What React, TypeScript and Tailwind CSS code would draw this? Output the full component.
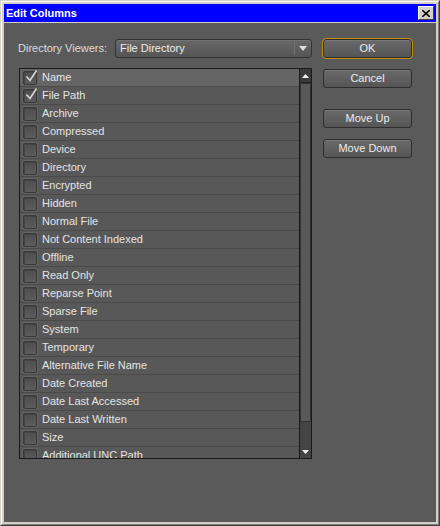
import React from "react";

const columns: { label: string; checked: boolean }[] = [
  { label: "Name", checked: true },
  { label: "File Path", checked: true },
  { label: "Archive", checked: false },
  { label: "Compressed", checked: false },
  { label: "Device", checked: false },
  { label: "Directory", checked: false },
  { label: "Encrypted", checked: false },
  { label: "Hidden", checked: false },
  { label: "Normal File", checked: false },
  { label: "Not Content Indexed", checked: false },
  { label: "Offline", checked: false },
  { label: "Read Only", checked: false },
  { label: "Reparse Point", checked: false },
  { label: "Sparse File", checked: false },
  { label: "System", checked: false },
  { label: "Temporary", checked: false },
  { label: "Alternative File Name", checked: false },
  { label: "Date Created", checked: false },
  { label: "Date Last Accessed", checked: false },
  { label: "Date Last Written", checked: false },
  { label: "Size", checked: false },
  { label: "Additional UNC Path", checked: false },
];

function CheckBox({ checked }: { checked: boolean }) {
  return (
    <div className="relative w-[14px] h-[14px] shrink-0 rounded-[2px] border border-[#383838] bg-gradient-to-b from-[#4e4e4e] to-[#5c5c5c] shadow-[inset_1px_1px_0_#444,0_0_0_1px_#636363]">
      {checked && (
        <svg
          className="absolute left-[1px] top-[-3px]"
          width="13"
          height="14"
          viewBox="0 0 13 14"
        >
          <path
            d="M1.5 7.5 L5 11.5 L11.5 1.5"
            fill="none"
            stroke="#d8d8d8"
            strokeWidth="1.6"
          />
        </svg>
      )}
    </div>
  );
}

function DarkButton({
  label,
  focused,
  className,
}: {
  label: string;
  focused?: boolean;
  className?: string;
}) {
  return (
    <div
      className={
        "w-[89px] h-[19px] flex items-center justify-center rounded-[3px] border bg-gradient-to-b from-[#6a6a6a] to-[#555555] text-[11px] text-[#ececec] shadow-[inset_0_1px_0_#777] " +
        (focused
          ? "border-[#2e2e2e] outline outline-1 outline-[#c08f00] "
          : "border-[#2e2e2e] ") +
        (className ?? "")
      }
    >
      {label}
    </div>
  );
}

export default function App() {
  return (
    <div
      className="w-[440px] h-[526px] bg-[#d4d0c8] border-t border-l border-r border-b border-t-[#d4d0c8] border-l-[#d4d0c8] border-r-[#404040] border-b-[#404040]"
      style={{ fontFamily: '"Liberation Sans", Arial, sans-serif' }}
    >
      <div className="w-full h-full border border-t-white border-l-white border-r-[#808080] border-b-[#808080] p-[2px] flex flex-col">
        {/* title bar */}
        <div className="h-[18px] bg-[#0000ff] flex items-center justify-between pl-[2px] pr-[2px]">
          <span className="text-white font-bold text-[11px] leading-none">Edit Columns</span>
          <div className="w-[16px] h-[14px] bg-[#d4d0c8] border border-t-white border-l-white border-r-[#404040] border-b-[#404040] flex items-center justify-center">
            <svg width="8" height="7" viewBox="0 0 8 7">
              <path d="M0 0 L8 7 M8 0 L0 7" stroke="#000" strokeWidth="1.6" />
            </svg>
          </div>
        </div>
        <div className="h-[1px] bg-[#d4d0c8]" />
        {/* client area */}
        <div className="flex-1 bg-[#5a5a5a] flex pt-[16px] pl-[14px]">
          <div className="flex flex-col w-[294px]">
            <div className="flex items-center h-[19px]">
              <span className="text-[11px] text-[#dcdcdc] w-[97px] pl-0">Directory Viewers:</span>
              <div className="w-[197px] h-[19px] rounded-[3px] border border-[#333] bg-gradient-to-b from-[#686868] to-[#555555] shadow-[inset_0_1px_0_#747474] flex items-center">
                <span className="flex-1 pl-[4px] text-[11px] text-[#ececec]">File Directory</span>
                <div className="w-[1px] h-[13px] bg-[#3c3c3c] border-r border-[#707070]" />
                <div className="w-[16px] flex items-center justify-center">
                  <svg width="8" height="5" viewBox="0 0 8 5">
                    <path d="M0 0 H8 L4 5 Z" fill="#e0e0e0" />
                  </svg>
                </div>
              </div>
            </div>
            {/* column list */}
            <div className="mt-[10px] ml-[1px] h-[391px] border border-[#1a1a1a] flex overflow-hidden">
              <div className="flex-1 flex flex-col overflow-hidden bg-[#585858]">
                {columns.map((c, i) => (
                  <div
                    key={c.label}
                    className={
                      "h-[18px] shrink-0 flex items-center pl-[3px] gap-[5px] border-b border-[#4a4a4a] " +
                      (i === 0 ? "bg-[#656565]" : "bg-[#585858]")
                    }
                  >
                    <CheckBox checked={c.checked} />
                    <span className="text-[11px] text-[#e4e4e4] leading-none">{c.label}</span>
                  </div>
                ))}
              </div>
              {/* scrollbar */}
              <div className="w-[12px] border-l border-[#1a1a1a] bg-[#444444] flex flex-col">
                <div className="h-[14px] bg-[#3a3a3a] flex items-center justify-center border-b border-[#222]">
                  <svg width="7" height="4" viewBox="0 0 7 4">
                    <path d="M0 4 H7 L3.5 0 Z" fill="#f0f0f0" />
                  </svg>
                </div>
                <div className="h-[339px] mx-0 bg-[#595959] border border-[#333] rounded-[1px]" />
                <div className="flex-1 flex items-end justify-center pb-[4px]">
                  <svg width="7" height="4" viewBox="0 0 7 4">
                    <path d="M0 0 H7 L3.5 4 Z" fill="#f0f0f0" />
                  </svg>
                </div>
              </div>
            </div>
          </div>
          <div className="flex flex-col ml-[11px]">
            <DarkButton label="OK" focused />
            <DarkButton label="Cancel" className="mt-[11px]" />
            <DarkButton label="Move Up" className="mt-[21px]" />
            <DarkButton label="Move Down" className="mt-[11px]" />
          </div>
        </div>
      </div>
    </div>
  );
}
